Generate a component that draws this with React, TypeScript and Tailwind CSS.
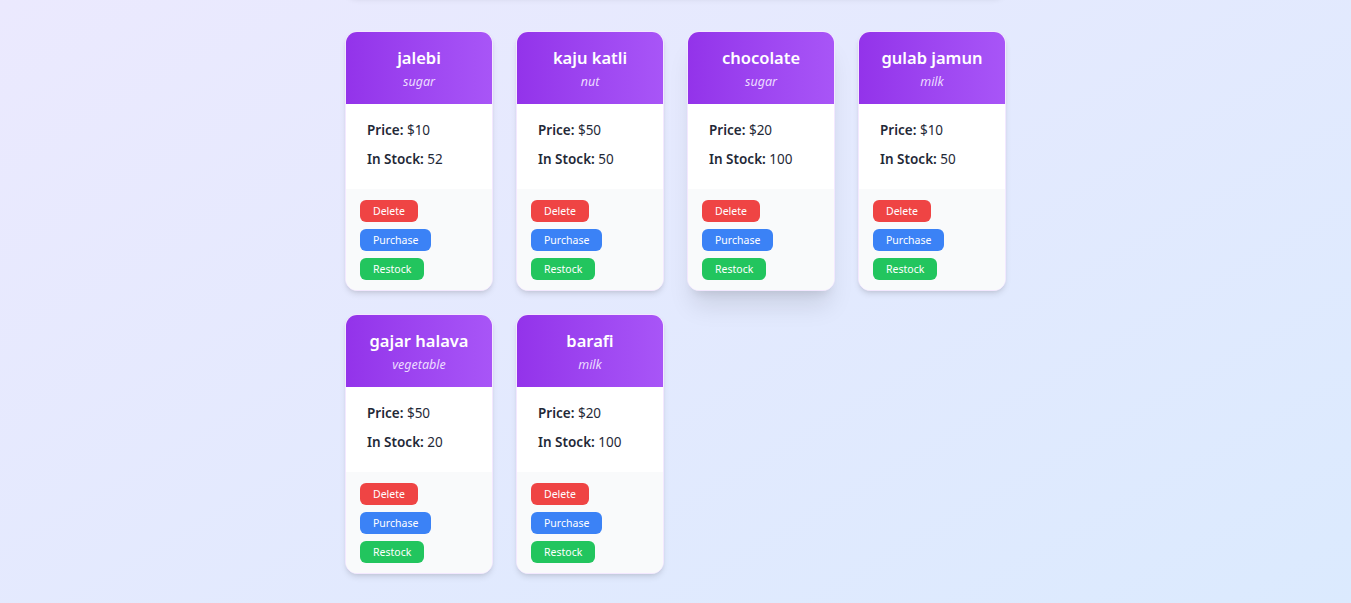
import React from 'react';

const sweets = [
  { id: 1, name: 'jalebi', category: 'sugar', price: 10, stock: 52 },
  { id: 2, name: 'kaju katli', category: 'nut', price: 50, stock: 50 },
  { id: 3, name: 'chocolate', category: 'sugar', price: 20, stock: 100 },
  { id: 4, name: 'gulab jamun', category: 'milk', price: 10, stock: 50 },
  { id: 5, name: 'gajar halava', category: 'vegetable', price: 50, stock: 20 },
  { id: 6, name: 'barafi', category: 'milk', price: 20, stock: 100 },
];

const App: React.FC = () => {
  return (
    <div
      className="min-h-screen bg-gradient-to-br from-[#ede9fe] to-[#dbeafe] pb-10"
      style={{ fontFamily: '"Segoe UI", "Noto Sans", "Open Sans", sans-serif' }}
    >
      <div className="w-[661px] mx-auto">
        {/* Form box above (scrolled off) */}
        <div className="h-40 -mt-[164px] mb-[35px] bg-white/60 rounded-xl shadow-md"></div>

        {/* Sweets grid */}
        <div className="grid grid-cols-4 gap-x-[23px] gap-y-[23px]">
          {sweets.map((s) => (
            <div
              key={s.id}
              className={`bg-white rounded-xl overflow-hidden border border-[#f3e8ff] ${
                s.id === 3 ? 'shadow-xl' : 'shadow-md'
              }`}
            >
              <div className="bg-gradient-to-r from-[#9333ea] to-[#a855f7] text-center pt-3 pb-3">
                <h3 className="text-[16.5px] leading-7 font-semibold text-white">{s.name}</h3>
                <p className="text-[12.5px] leading-5 italic text-[#ecdcff]">{s.category}</p>
              </div>

              <div className="px-[21px] pt-4 pb-5 space-y-[9px] text-[13.5px] leading-5 text-[#1f2937]">
                <p>
                  <span className="font-semibold">Price:</span> ${s.price}
                </p>
                <p>
                  <span className="font-semibold">In Stock:</span> {s.stock}
                </p>
              </div>

              <div className="bg-[#f9fafb] px-[14px] pt-[11px] pb-[10px] flex flex-col items-start gap-[7px]">
                <button className="bg-[#ef4444] text-white text-[10.5px] leading-4 px-[13px] py-[3px] rounded-md">
                  Delete
                </button>
                <button className="bg-[#3b82f6] text-white text-[10.5px] leading-4 px-[13px] py-[3px] rounded-md">
                  Purchase
                </button>
                <button className="bg-[#22c55e] text-white text-[10.5px] leading-4 px-[13px] py-[3px] rounded-md">
                  Restock
                </button>
              </div>
            </div>
          ))}
        </div>
      </div>
    </div>
  );
};

export default App;
